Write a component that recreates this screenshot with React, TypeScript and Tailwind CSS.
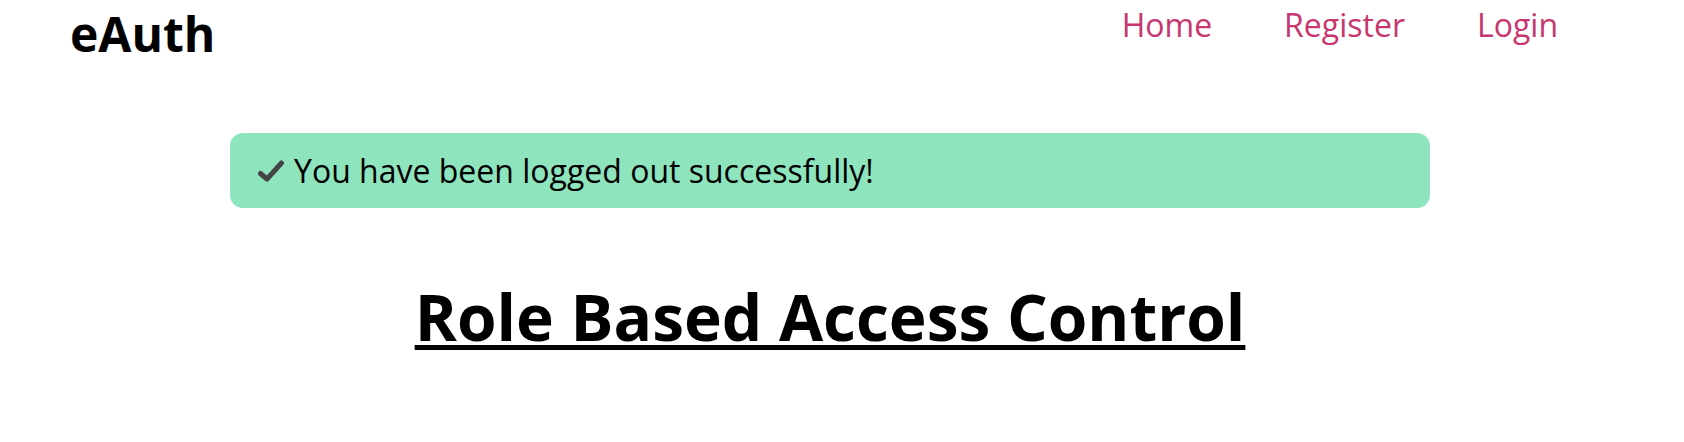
import React from "react";

export default function App() {
  return (
    <div className="min-h-[442px] bg-white text-black" style={{ fontFamily: '"Open Sans", "Noto Sans", sans-serif' }}>
      <header className="flex items-start justify-between pl-[70px] pr-[126px]">
        <div className="pt-[1px] text-[48px] font-bold leading-[66px]">eAuth</div>
        <nav className="flex gap-[72px] pt-[3px] text-[32px] leading-[44px] text-[#c8366f]">
          <a href="#">Home</a>
          <a href="#">Register</a>
          <a href="#">Login</a>
        </nav>
      </header>
      <main className="ml-[230px] w-[1200px] pt-[66px]">
        <div className="flex h-[75px] items-center rounded-[13px] bg-[#8ee4bd] pl-[27px] text-[32px]">
          <svg width="28" height="22" viewBox="0 0 28 22" className="mr-[9px] shrink-0">
            <path d="M3.5 13.5 L10 19 L24.5 3" fill="none" stroke="#444444" strokeWidth="5" strokeLinecap="round" strokeLinejoin="round" />
          </svg>
          <span>You have been logged out successfully!</span>
        </div>
        <h1 className="mt-[69px] text-center text-[64px] font-bold leading-[80px] underline decoration-[5px] underline-offset-[4px]">
          Role Based Access Control
        </h1>
      </main>
    </div>
  );
}
